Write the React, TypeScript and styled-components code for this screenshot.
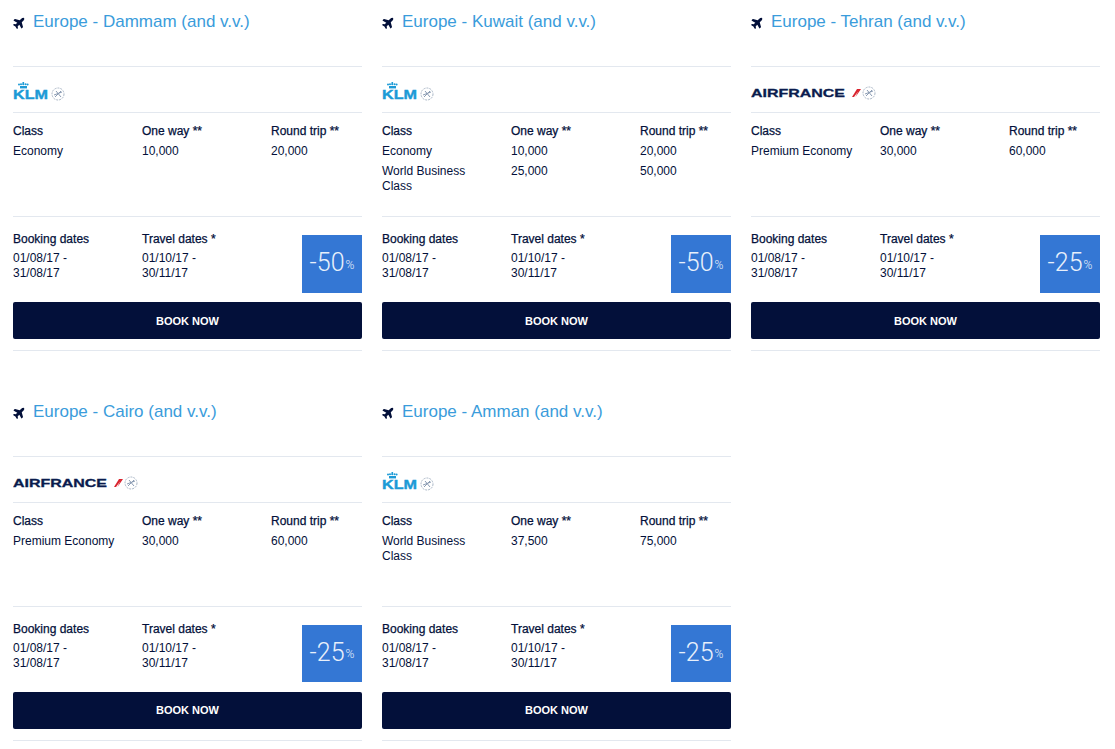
import React from "react";
import styled, { createGlobalStyle } from "styled-components";
import { FaPlane } from "react-icons/fa";

const Global = createGlobalStyle`
  html, body { margin: 0; padding: 0; background: #fff; }
  body { font-family: "Liberation Sans", Arial, sans-serif; color: #03103a; }
`;

const Grid = styled.div`
  display: grid;
  grid-template-columns: repeat(3, 349px);
  column-gap: 20px;
  row-gap: 38.5px;
  padding: 0 13px;
  width: 1087px;
`;

const Card = styled.article`
  display: flex;
  flex-direction: column;
  height: 350px;
  border-bottom: 1px solid #e3e8ef;
  box-sizing: content-box;
`;

const Header = styled.header`
  height: 66px;
  padding-top: 12px;
  box-sizing: border-box;
  border-bottom: 1px solid #e3e8ef;
  display: flex;
  align-items: flex-start;
  box-sizing: content-box;
  height: 54px;
`;

const PlaneIcon = styled(FaPlane)`
  width: 13px;
  height: 13px;
  margin: 4px 7px 0 0;
  transform: rotate(-45deg);
  color: #03103a;
  flex: none;
`;

const Title = styled.h2`
  margin: 0;
  font-size: 17px;
  line-height: 20px;
  font-weight: 400;
  color: #3a9cdb;
`;

const LogoRow = styled.div`
  height: 45px;
  border-bottom: 1px solid #e3e8ef;
  display: flex;
  align-items: flex-end;
  padding-bottom: 9px;
  box-sizing: border-box;
  height: 46px;
`;

const Details = styled.div`
  display: grid;
  grid-template-columns: 129px 129px 1fr;
  align-content: start;
  row-gap: 5px;
  height: 104px;
  box-sizing: border-box;
  padding-top: 11px;
  border-bottom: 1px solid #e3e8ef;
  font-size: 12px;
  line-height: 15px;
`;

const Head = styled.div`
  font-weight: 400;
  color: #03103a;
  -webkit-text-stroke: 0.25px #03103a;
  margin-bottom: 0;
`;

const Cell = styled.div`
  padding-right: 24px;
`;

const Dates = styled.div`
  display: grid;
  grid-template-columns: 129px 129px 1fr;
  height: 85px;
  padding-top: 15px;
  box-sizing: border-box;
  font-size: 12px;
  line-height: 15px;
`;

const DateText = styled.div`
  margin-top: 4px;
  padding-right: 40px;
`;

const Badge = styled.div`
  justify-self: end;
  width: 60px;
  height: 57.5px;
  margin-top: 3px;
  background: #3477d4;
  color: #e8f0fb;
  font-family: Roboto, "Liberation Sans", sans-serif;
  font-weight: 300;
  font-size: 25px;
  display: flex;
  align-items: center;
  justify-content: center;
  padding-bottom: 2px;
  box-sizing: border-box;
  white-space: nowrap;
`;

const Percent = styled.span`
  font-size: 12px;
  margin-top: 5px;
  margin-left: 1px;
`;

const BookButton = styled.button`
  height: 37px;
  border: 0;
  border-radius: 2px;
  padding: 0;
  background: #03103a;
  color: #fff;
  font-family: "Liberation Sans", Arial, sans-serif;
  font-size: 11px;
  font-weight: 700;
  cursor: pointer;
`;

const KlmLogo = () => (
  <svg width="54" height="24" viewBox="0 0 54 24" role="img" aria-label="KLM">
    <g fill="#1c9ad6">
      <rect x="9.5" y="3" width="1.6" height="1.6" />
      <circle cx="6" cy="5.5" r="1" />
      <circle cx="8" cy="5.3" r="1" />
      <circle cx="10.3" cy="5.2" r="1.1" />
      <circle cx="12.6" cy="5.3" r="1" />
      <circle cx="14.6" cy="5.5" r="1" />
      <rect x="7" y="7" width="7" height="2.4" />
      <text x="0" y="20" fontFamily="'Liberation Sans', sans-serif" fontWeight="700" fontSize="13.5" textLength="35" lengthAdjust="spacingAndGlyphs" stroke="#1c9ad6" strokeWidth="0.4">KLM</text>
    </g>
    <Alliance x={45} y={15} />
  </svg>
);

const Alliance = ({ x, y }: { x: number; y: number }) => (
  <g transform={`translate(${x} ${y})`} fill="none" stroke="#a9b6c6">
    <circle r="6" strokeWidth="1" strokeDasharray="2 1" />
    <path d="M-4 1 L4 -2 M-3 3 L3 -3 M-2 -3 L3 3" strokeWidth="1" stroke="#8a9bb3" />
  </g>
);

const AfLogo = () => (
  <svg width="126" height="24" viewBox="0 0 126 24" role="img" aria-label="Air France">
    <text x="0" y="18" fontFamily="'Liberation Sans', sans-serif" fontWeight="700" fontSize="11.5" textLength="94" lengthAdjust="spacingAndGlyphs" fill="#0a1c4e" stroke="#0a1c4e" strokeWidth="0.3">AIRFRANCE</text>
    <path d="M101 18 L106 10 L109 10 L103 18 Z" fill="#d9232e" />
    <path d="M104 18 L110 10 L108.6 18 Z" fill="#d9232e" opacity="0" />
    <path d="M104.5 18 L110 10 L108 10 Z" fill="#d9232e" />
    <Alliance x={118} y={14} />
  </svg>
);

type Offer = {
  route: string;
  logo: "klm" | "af";
  rows: [string, string, string][];
  discount: string;
};

const offers: Offer[] = [
  { route: "Europe - Dammam (and v.v.)", logo: "klm", rows: [["Economy", "10,000", "20,000"]], discount: "-50" },
  { route: "Europe - Kuwait (and v.v.)", logo: "klm", rows: [["Economy", "10,000", "20,000"], ["World Business Class", "25,000", "50,000"]], discount: "-50" },
  { route: "Europe - Tehran (and v.v.)", logo: "af", rows: [["Premium Economy", "30,000", "60,000"]], discount: "-25" },
  { route: "Europe - Cairo (and v.v.)", logo: "af", rows: [["Premium Economy", "30,000", "60,000"]], discount: "-25" },
  { route: "Europe - Amman (and v.v.)", logo: "klm", rows: [["World Business Class", "37,500", "75,000"]], discount: "-25" },
];

export default function App() {
  return (
    <>
      <Global />
      <Grid>
        {offers.map((o) => (
          <Card key={o.route}>
            <Header>
              <PlaneIcon />
              <Title>{o.route}</Title>
            </Header>
            <LogoRow>{o.logo === "klm" ? <KlmLogo /> : <AfLogo />}</LogoRow>
            <Details>
              <Head>Class</Head>
              <Head>One way **</Head>
              <Head>Round trip **</Head>
              {o.rows.map((r) => (
                <React.Fragment key={r[0]}>
                  <Cell>{r[0]}</Cell>
                  <Cell>{r[1]}</Cell>
                  <Cell>{r[2]}</Cell>
                </React.Fragment>
              ))}
            </Details>
            <Dates>
              <div>
                <Head>Booking dates</Head>
                <DateText>01/08/17 - 31/08/17</DateText>
              </div>
              <div>
                <Head>Travel dates *</Head>
                <DateText>01/10/17 - 30/11/17</DateText>
              </div>
              <Badge>
                {o.discount}
                <Percent>%</Percent>
              </Badge>
            </Dates>
            <BookButton>BOOK NOW</BookButton>
          </Card>
        ))}
      </Grid>
    </>
  );
}
